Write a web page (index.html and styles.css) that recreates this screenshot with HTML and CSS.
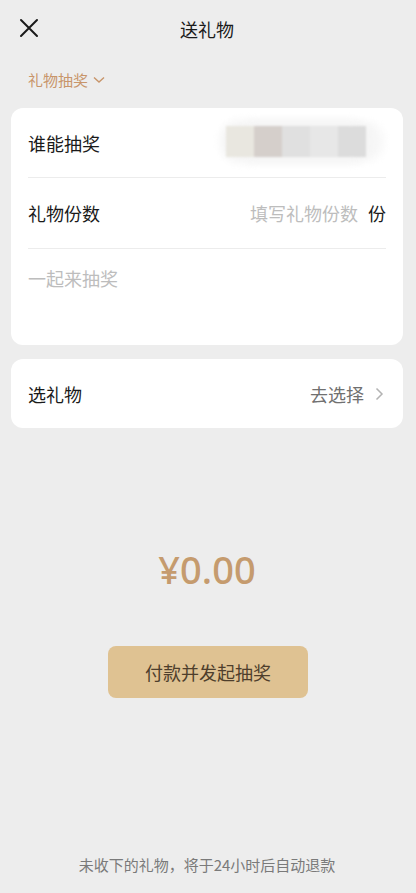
FILE: index.html
```html
<!DOCTYPE html>
<html lang="zh">
<head>
<meta charset="utf-8">
<link rel="stylesheet" href="styles.css">
</head>
<body>
<div class="page">
  <header class="topbar">
    <svg class="close" width="20" height="20" viewBox="0 0 20 20"><path d="M2 2 L18 18 M18 2 L2 18" stroke="#1a1a1a" stroke-width="2" fill="none" stroke-linecap="round"/></svg>
    <div class="title">送礼物</div>
  </header>
  <div class="mode">礼物抽奖<svg class="chev-down" width="12" height="8" viewBox="0 0 12 8"><path d="M1 1.5 L6 6 L11 1.5" stroke="#c8956a" stroke-width="1.4" fill="none"/></svg></div>

  <section class="card">
    <div class="row">
      <span class="label">谁能抽奖</span>
      <div class="blur">
        <i style="background:#e9e7e0"></i><i style="background:#d5cfcb"></i><i style="background:#e0e0e0"></i><i style="background:#e7e7e7"></i><i style="background:#dcdcdc"></i>
      </div>
    </div>
    <div class="row">
      <span class="label">礼物份数</span>
      <span class="right"><span class="ph">填写礼物份数</span><span class="unit">份</span></span>
    </div>
    <div class="note">一起来抽奖</div>
  </section>

  <section class="card card2">
    <div class="row last">
      <span class="label">选礼物</span>
      <span class="right"><span class="go">去选择</span><svg class="chev-right" width="9" height="14" viewBox="0 0 9 14"><path d="M1.5 1.5 L7 7 L1.5 12.5" stroke="#b3b3b3" stroke-width="1.5" fill="none"/></svg></span>
    </div>
  </section>

  <div class="amount">¥0.00</div>
  <div class="btnwrap"><button class="pay">付款并发起抽奖</button></div>

  <div class="foot">未收下的礼物，将于24小时后自动退款</div>
</div>
</body>
</html>
```
FILE: styles.css
```css
* { box-sizing: border-box; }
html, body { margin: 0; padding: 0; }
body {
  background: #ededed;
  font-family: "Noto Sans CJK SC", "Noto Sans", sans-serif;
  color: #1a1a1a;
}
.page {
  width: 416px;
  height: 893px;
  display: flex;
  flex-direction: column;
  padding: 0 13px 0 11px;
}
.topbar {
  position: relative;
  height: 57px;
  display: flex;
  align-items: center;
  justify-content: center;
}
.close { position: absolute; left: 8px; top: 18px; }
.title { font-size: 18px; line-height: 24px; color: #1a1a1a; }
.mode {
  display: flex;
  align-items: center;
  gap: 5px;
  margin-left: 17px;
  height: 45px;
  font-size: 15px;
  color: #c8956a;
}
.chev-down { margin-top: 1px; }
.card {
  margin-top: 6px;
  background: #fff;
  border-radius: 12px;
  padding: 0 17px;
  height: 237px;
}
.card2 { margin-top: 14px; height: 69px; }
.row {
  height: 70px;
  display: flex;
  align-items: center;
  justify-content: space-between;
  border-bottom: 1px solid #ececec;
}
.row + .row { height: 71px; }
.row.last { border-bottom: none; height: 69px; }
.label { font-size: 18px; color: #1a1a1a; }
.blur {
  display: flex;
  height: 31px;
  margin-right: 20px;
  margin-top: -3px;
  filter: blur(1.2px);
  box-shadow: 0 0 8px 6px #f5f5f5, 14px 0 10px 4px #f7f7f7;
  border-radius: 14px;
}
.blur i { display: block; width: 28px; height: 31px; }
.right { display: flex; align-items: center; }
.ph { font-size: 18px; color: #bdbdbd; }
.unit { font-size: 18px; color: #1a1a1a; margin-left: 10px; }
.go { font-size: 18px; color: #707070; margin-right: 11px; }
.chev-right { margin-right: 2px; }
.note {
  padding-top: 16px;
  font-size: 18px;
  color: #bdbdbd;
}
.amount {
  margin-top: 116px;
  text-align: center;
  font-family: "Noto Sans", sans-serif;
  font-size: 38px;
  font-weight: 500;
  color: #c59b6e;
  line-height: 50px;
}
.btnwrap { margin-top: 52px; display: flex; justify-content: center; }
.pay {
  width: 200px;
  height: 52px;
  border: none;
  border-radius: 8px;
  background: #dfc292;
  font-family: "Noto Sans CJK SC", sans-serif;
  font-size: 18px;
  color: #4e3e2c;
  margin-left: 2px;
}
.foot {
  margin-top: auto;
  margin-bottom: 18px;
  text-align: center;
  font-size: 15px;
  color: #7a7a7a;
}
```
